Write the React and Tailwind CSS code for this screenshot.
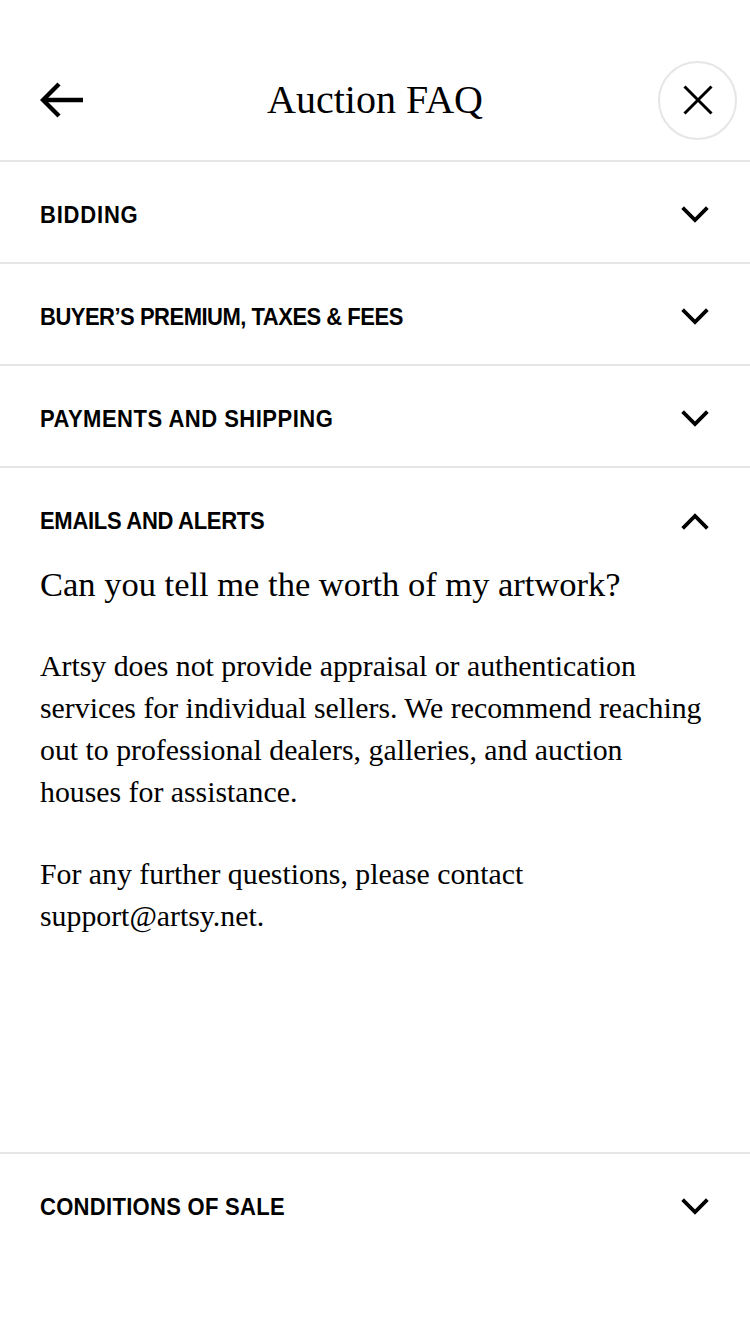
import React from "react";

const serif = { fontFamily: '"Liberation Serif", "Times New Roman", serif' };

function Chevron({ up }) {
  return (
    <svg width="28" height="18" viewBox="0 0 28 18" fill="none" stroke="black" strokeWidth="3.8" strokeLinecap="square" className="mt-[6px]">
      {up ? <path d="M3 15 L14 4 L25 15" /> : <path d="M3 3 L14 14 L25 3" />}
    </svg>
  );
}

function Row({ label, up, track }) {
  return (
    <div className="h-[100px] flex items-center justify-between pl-10 pr-[41px]">
      <span className={"inline-block scale-y-[1.1] origin-center font-['Liberation_Sans',Arial,sans-serif] font-bold text-[22px] text-black pt-[5px] " + track}>
        {label}
      </span>
      <Chevron up={up} />
    </div>
  );
}

export default function App() {
  return (
    <div className="w-[750px] h-[1334px] bg-white overflow-hidden">
      <div className="h-[160px] pt-10 flex items-center justify-between pl-10 pr-[13px] relative">
        <svg width="44" height="38" viewBox="0 0 44 38" fill="none" stroke="black" strokeWidth="4.4">
          <path d="M43 19 H4" />
          <path d="M19 3 L3 19 L19 35" strokeLinejoin="miter" />
        </svg>
        <div style={serif} className="absolute left-0 right-0 top-10 bottom-0 flex items-center justify-center text-[40px] text-black pointer-events-none">
          Auction FAQ
        </div>
        <div className="w-[79px] h-[79px] rounded-full border-2 border-[#e6e6e6] flex items-center justify-center">
          <svg width="30" height="30" viewBox="0 0 30 30" stroke="black" strokeWidth="3">
            <path d="M1.5 1.5 L28.5 28.5 M28.5 1.5 L1.5 28.5" />
          </svg>
        </div>
      </div>
      <div className="border-t-2 border-[#e6e6e6]">
        <Row label="BIDDING" track="tracking-[0.8px]" />
      </div>
      <div className="border-t-2 border-[#e6e6e6]">
        <Row label="BUYER’S PREMIUM, TAXES & FEES" track="tracking-[-0.5px]" />
      </div>
      <div className="border-t-2 border-[#e6e6e6]">
        <Row label="PAYMENTS AND SHIPPING" track="tracking-[0.5px]" />
      </div>
      <div className="border-t-2 border-[#e6e6e6] h-[686px]">
        <Row label="EMAILS AND ALERTS" up track="tracking-[-0.3px]" />
        <div className="px-10" style={serif}>
          <div className="text-[34.5px] leading-[40px] text-black -mt-[4px] whitespace-nowrap">
            Can you tell me the worth of my artwork?
          </div>
          <p className="mt-[41px] text-[29.8px] leading-[42px] text-black whitespace-nowrap">
            <span className="block">Artsy does not provide appraisal or authentication</span>
            <span className="block">services for individual sellers. We recommend reaching</span>
            <span className="block">out to professional dealers, galleries, and auction</span>
            <span className="block">houses for assistance.</span>
          </p>
          <p className="mt-[40px] text-[29.8px] leading-[42px] text-black whitespace-nowrap">
            <span className="block">For any further questions, please contact</span>
            <span className="block">support@artsy.net.</span>
          </p>
        </div>
      </div>
      <div className="border-t-2 border-[#e6e6e6]">
        <Row label="CONDITIONS OF SALE" track="tracking-[0.3px]" />
      </div>
    </div>
  );
}
